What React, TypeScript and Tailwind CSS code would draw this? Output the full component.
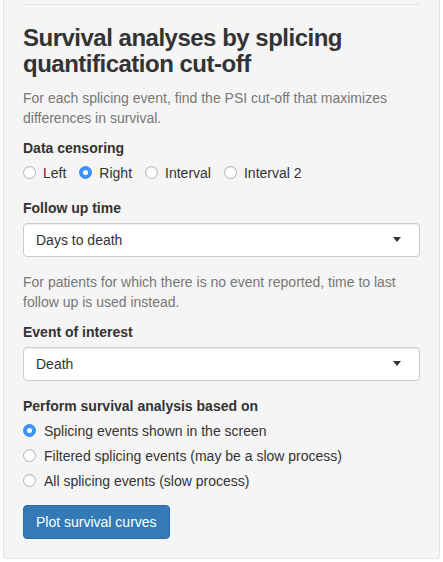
import React from 'react';

const Radio = ({ checked }: { checked?: boolean }) =>
  checked ? (
    <span className="flex h-[13px] w-[13px] shrink-0 items-center justify-center rounded-full border border-[#3a8ef0] bg-[#3d94f6]">
      <span className="h-[5px] w-[5px] rounded-full bg-white" />
    </span>
  ) : (
    <span className="h-[13px] w-[13px] shrink-0 rounded-full border border-[#b4b4b4] bg-white shadow-[inset_0_1px_1px_rgba(0,0,0,0.08)]" />
  );

const Select = ({ value }: { value: string }) => (
  <div className="flex h-[34px] items-center justify-between rounded-[4px] border border-[#cccccc] bg-white pl-[12px] pr-[18px] shadow-[inset_0_1px_1px_rgba(0,0,0,0.075)]">
    <span className="text-[14px] leading-5 text-[#333]">{value}</span>
    <svg width="8" height="5" viewBox="0 0 8 5">
      <path d="M0 0 H8 L4 5 Z" fill="#333" />
    </svg>
  </div>
);

const Label = ({ children }: { children: React.ReactNode }) => (
  <div className="mb-[5px] text-[14px] font-bold leading-5 text-[#333]">{children}</div>
);

export default function App() {
  const censoring = ['Left', 'Right', 'Interval', 'Interval 2'];
  const basedOn = [
    'Splicing events shown in the screen',
    'Filtered splicing events (may be a slow process)',
    'All splicing events (slow process)',
  ];

  return (
    <div className="min-h-[562px] bg-white" style={{ fontFamily: '"Liberation Sans", Arial, sans-serif' }}>
      <div className="mx-[3px] rounded-b-[4px] border border-t-0 border-[#e3e3e3] bg-[#f5f5f5] px-[19px] pb-[19px] pt-[4px] text-[#333]">
        <div className="border-t border-[#e6e6e6]" />

        <h3 className="mt-[20px] mb-[10px] text-[24px] font-bold leading-[1.1] tracking-[-0.5px] text-[#333]">
          Survival analyses by splicing quantification cut-off
        </h3>
        <p className="mb-[10px] text-[14px] leading-5 text-[#777]">
          For each splicing event, find the PSI cut-off that maximizes differences in survival.
        </p>

        <div className="mb-[15px]">
          <Label>Data censoring</Label>
          <div className="flex h-5 items-center gap-[13px]">
            {censoring.map((c) => (
              <div key={c} className="flex items-center gap-[7px] text-[14px] leading-5">
                <Radio checked={c === 'Right'} />
                <span>{c}</span>
              </div>
            ))}
          </div>
        </div>

        <div className="mb-[15px]">
          <Label>Follow up time</Label>
          <Select value="Days to death" />
        </div>
        <p className="mb-[10px] text-[14px] leading-5 text-[#777]">
          For patients for which there is no event reported, time to last follow up is used instead.
        </p>

        <div className="mb-[15px]">
          <Label>Event of interest</Label>
          <Select value="Death" />
        </div>

        <div className="mb-[14px]">
          <Label>Perform survival analysis based on</Label>
          <div className="flex flex-col gap-[5px]">
            {basedOn.map((b, i) => (
              <div key={b} className="flex h-5 items-center gap-[8px] text-[14px] leading-5">
                <Radio checked={i === 0} />
                <span>{b}</span>
              </div>
            ))}
          </div>
        </div>

        <button className="h-[34px] rounded-[4px] border border-[#2e6da4] bg-[#337ab7] px-[12px] text-[14px] leading-5 text-white">
          Plot survival curves
        </button>
      </div>
    </div>
  );
}
